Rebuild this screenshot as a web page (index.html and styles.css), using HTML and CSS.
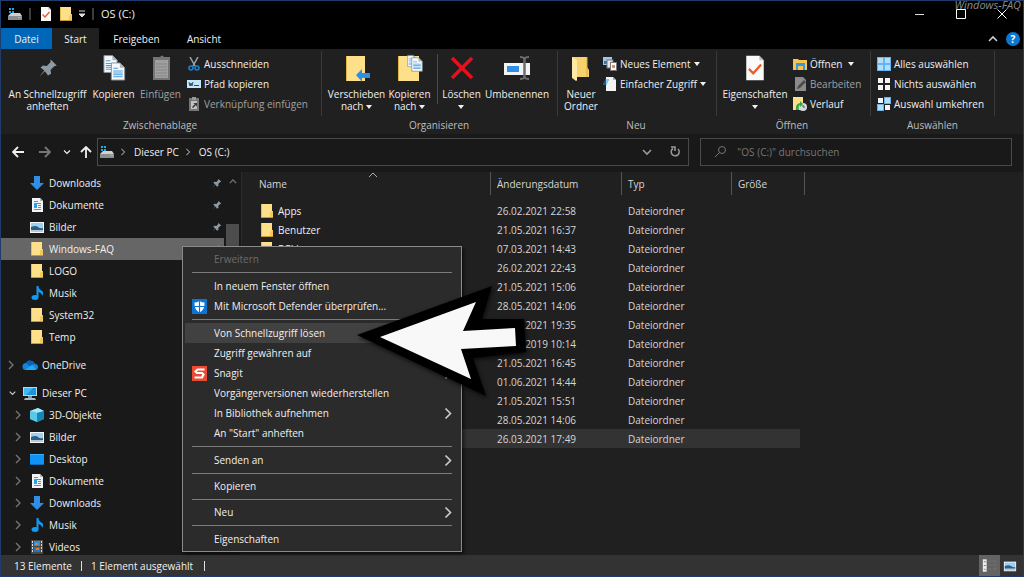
FILE: index.html
```html
<!DOCTYPE html>
<html lang="de">
<head>
<meta charset="utf-8">
<title>OS (C:)</title>
<link rel="stylesheet" href="styles.css">
</head>
<body>
<svg class="sprite" aria-hidden="true">
  <symbol id="folder" viewBox="0 0 14 16"><path d="M1 1h11v14H1z" fill="#ffe08a"/><path d="M1 1h1v14H1z" fill="#e9bd4c"/><path d="M10 10l2-2h1v7h-3z" fill="#f3c95c"/><path d="M1 14h12v1H1z" fill="#c9982e"/></symbol>
  <symbol id="drive" viewBox="0 0 16 16"><path d="M2 2h2v2H2zM5 2h2v2H5zM2 5h2v2H2zM5 5h2v2H5z" fill="#1fa8e8"/><path d="M4 7h9l2 3H1z" fill="#d0d0d0"/><rect x="1" y="10" width="14" height="4" fill="#8b8f90"/><rect x="11" y="11" width="3" height="1" fill="#4df05a"/></symbol>
  <symbol id="down" viewBox="0 0 16 16"><path d="M5 1h6v7h4l-7 7-7-7h4z" fill="#2f8fe4"/></symbol>
  <symbol id="doc" viewBox="0 0 16 16"><path d="M3 1h8l3 3v11H3z" fill="#f1f5f7"/><path d="M11 1v3h3" fill="#a9b7bf"/><path d="M5 4h4v1H5zM5 6h7v1H5zM9 8h3v1H9zM5 12h7v1H5zM9 10h3v1H9z" fill="#6a8ea8"/><path d="M5 7h3v4H5z" fill="#2c9fe6"/></symbol>
  <symbol id="image" viewBox="0 0 16 16"><rect x="1" y="3" width="14" height="11" fill="#f3f5f6"/><rect x="2" y="4" width="12" height="9" fill="#9ccff2"/><path d="M2 8q5-2 7 0t5 1v2H2z" fill="#315d80"/><path d="M2 11h12v2H2z" fill="#b7c9d4"/></symbol>
  <symbol id="music" viewBox="0 0 16 16"><ellipse cx="6" cy="12.500" rx="3.500" ry="2.500" fill="#129af0"/><path d="M7.500 12V1h2q0 3 3 4.500T13 11q0-3-3.500-4v5z" fill="#129af0"/></symbol>
  <symbol id="cloud" viewBox="0 0 16 16"><path d="M4 13a3.500 3.500 0 0 1 0-7 5 5 0 0 1 9 1 3 3 0 0 1 0 6z" fill="#1484dc"/><path d="M4 6a5 5 0 0 1 9 1q-3 0-5 2z" fill="#0a62b5"/><path d="M3 13l7-5 4 4-1 1z" fill="#2ba7f0"/></symbol>
  <symbol id="pc" viewBox="0 0 16 16"><rect x="1" y="2" width="14" height="9" fill="#b9d7e7"/><rect x="2" y="3" width="12" height="7" fill="#1b94dc"/><path d="M2 3h9L4 10H2z" fill="#45b8f2"/><path d="M6 11h4v2H6z" fill="#7a94a3"/><path d="M3 13h10l1 2H2z" fill="#a9bac4"/></symbol>
  <symbol id="cube" viewBox="0 0 16 16"><path d="M1 4l8-3 6 3v8l-7 3-7-3z" fill="#2fb3df"/><path d="M1 4l8-3 6 3-7 2z" fill="#a7e8f6"/><path d="M8 6l7-2v8l-7 3z" fill="#1a86b8"/><path d="M1 4l7 2v9l-7-3z" fill="#59c9ea"/></symbol>
  <symbol id="desktop" viewBox="0 0 16 16"><rect x="1" y="3" width="14" height="11" fill="#0f93f5"/><path d="M1 3h14v1H1z" fill="#39adff"/><path d="M1 13h14v1H1z" fill="#0a6ec0"/></symbol>
  <symbol id="film" viewBox="0 0 16 16"><rect x="2" y="1" width="12" height="14" fill="#4a4a4a"/><path d="M3 2h1v2H3zM3 5h1v2H3zM3 8h1v2H3zM3 11h1v2H3zM12 2h1v2h-1zM12 5h1v2h-1zM12 8h1v2h-1zM12 11h1v2h-1z" fill="#ddd"/><rect x="5" y="2" width="6" height="5" fill="#2b8fd8"/><rect x="5" y="8" width="6" height="5" fill="#2b72b8"/><path d="M6 4h3v2H6zM7 9h3v2H7z" fill="#e27a35"/></symbol>
  <symbol id="pin" viewBox="0 0 16 16"><path d="M10 1l5 5-2 .5-3 3 .5 3L8 14l-2.500-3.500L1 15l4-5L2 7.500 4 6l3 .3 3-3z" fill="#8d99a3"/></symbol>
  <symbol id="chev" viewBox="0 0 8 10"><path d="M2 1l4 4-4 4" fill="none" stroke="currentColor" stroke-width="1.300"/></symbol>
  <symbol id="chevdown" viewBox="0 0 10 8"><path d="M1 2l4 4 4-4" fill="none" stroke="currentColor" stroke-width="1.600"/></symbol>
  <symbol id="chevup" viewBox="0 0 10 8"><path d="M1 6l4-4 4 4" fill="none" stroke="currentColor" stroke-width="1.600"/></symbol>
  <symbol id="caret" viewBox="0 0 6 4"><path d="M0 0h6L3 4z" fill="currentColor"/></symbol>
  <symbol id="check" viewBox="0 0 24 32"><path d="M2 2h15l5 5v23H2z" fill="#fafafa"/><path d="M17 2v5h5z" fill="#b9b9b9"/><path d="M5 17l5 5 9-10" fill="none" stroke="#ee5a24" stroke-width="2.600"/></symbol>
  <symbol id="page" viewBox="0 0 16 20"><path d="M1 1h9l5 5v13H1z" fill="#f5f9fc" stroke="#8a8f94"/><path d="M10 1v5h5z" fill="#aab6c0"/><path d="M3 6h5v1H3zM3 9h10v1H3zM3 11h10v1H3zM3 13h10v1H3zM3 15h10v1H3z" fill="#4a9ee0"/></symbol>
  <symbol id="arrowleft" viewBox="0 0 12 12"><path d="M6 1L1 6l5 5M1 6h11" fill="none" stroke="currentColor" stroke-width="1.800"/></symbol>
</svg>

<div class="window">
  <header class="titlebar">
    <svg class="i16"><use href="#drive"/></svg>
    <span class="bar"></span>
    <button class="plain" aria-label="Eigenschaften"><svg class="i16"><use href="#check"/></svg></button>
    <button class="plain" aria-label="Neuer Ordner"><svg class="i16"><use href="#folder"/></svg></button>
    <button class="plain" aria-label="Symbolleiste anpassen"><svg class="quick" viewBox="0 0 8 8"><path d="M1 1h6M1 4h6L4 7z" stroke="#ddd" fill="#ddd"/></svg></button>
    <span class="bar"></span>
    <h1>OS (C:)</h1>
    <div class="controls">
      <button class="plain" aria-label="Minimieren"><svg viewBox="0 0 12 12"><path d="M1 6.500h9" stroke="#ddd"/></svg></button>
      <button class="plain" aria-label="Maximieren"><svg viewBox="0 0 12 12"><path d="M1.500 1.500h9v9h-9z" stroke="#fff" fill="none"/></svg></button>
      <button class="plain" aria-label="Schließen"><svg viewBox="0 0 12 12"><path d="M1.500 1.500l9 9M10.500 1.500l-9 9" stroke="#fff"/></svg></button>
    </div>
    <span class="watermark">Windows-FAQ</span>
  </header>

  <nav class="tabs">
    <button class="tab file">Datei</button>
    <button class="tab active">Start</button>
    <button class="tab">Freigeben</button>
    <button class="tab">Ansicht</button>
    <div class="tabtools">
      <button class="plain" aria-label="Menüband minimieren"><svg class="chevron"><use href="#chevup"/></svg></button>
      <button class="help" aria-label="Hilfe">?</button>
    </div>
  </nav>

  <section class="ribbon">
    <div class="group clipboard">
      <div class="tools">
        <button class="big"><svg class="i22"><use href="#pin"/></svg><span>An Schnellzugriff<br>anheften</span></button>
        <button class="big"><svg class="i26" viewBox="0 0 26 28"><use href="#page" x="2" y="0" width="15" height="20"/><use href="#page" x="9" y="8" width="16" height="19"/></svg><span>Kopieren</span></button>
        <button class="big dim"><svg class="i26" viewBox="0 0 26 28"><rect x="5" y="3" width="17" height="23" fill="#747474"/><path d="M7 6h13v18H7z" fill="#a0a0a0"/><path d="M8 10h11M8 13h11M8 16h11M8 19h11M8 22h11" stroke="#858585"/><path d="M9 6V3h3q2-3 4 0h2v3z" fill="#747474"/></svg><span>Einfügen</span></button>
        <div class="stack">
          <button class="small"><svg class="i14" viewBox="0 0 14 14"><path d="M3 0l5 9M11 0L6 9" stroke="#9aa7af" stroke-width="1.500"/><circle cx="4" cy="11" r="2" fill="none" stroke="#1781d2" stroke-width="1.600"/><circle cx="10" cy="11" r="2" fill="none" stroke="#1781d2" stroke-width="1.600"/></svg>Ausschneiden</button>
          <button class="small"><svg class="i14" viewBox="0 0 14 14"><rect y="3" width="14" height="8" fill="#c8e6fa"/><path d="M2 5l1 4 1-3 1 3 1-4M7 8.500h5" stroke="#23506e" fill="none"/></svg>Pfad kopieren</button>
          <button class="small dim"><svg class="i14" viewBox="0 0 14 14"><path d="M2 1h10v13H2z" fill="#777"/><path d="M4 4h6v8H4z" fill="#c2c2c2"/><path d="M5 0h4v3H5z" fill="#999"/><path d="M5 10l3-3-2-1h4v4L9 8l-3 3z" fill="#333"/></svg>Verknüpfung einfügen</button>
        </div>
      </div>
      <h2>Zwischenablage</h2>
    </div>
    <div class="group organize">
      <div class="tools">
        <button class="big move"><svg class="i26" viewBox="0 0 26 28"><path d="M2 2h19v25H2z" fill="#ffe08a"/><path d="M2 2h1v25H2z" fill="#e3b64a"/><path d="M12 21l6-6v4h8v5h-8v4z" fill="#2f8fe4"/></svg><span>Verschieben<br>nach <svg class="caret"><use href="#caret"/></svg></span></button>
        <button class="big"><svg class="i26" viewBox="0 0 26 28"><path d="M1 2h21v25H1z" fill="#ffe08a"/><path d="M1 2h1v25H1z" fill="#e3b64a"/><use href="#page" x="10" y="0" width="10" height="14"/><use href="#page" x="14" y="3" width="12" height="15"/></svg><span>Kopieren<br>nach <svg class="caret"><use href="#caret"/></svg></span></button>
        <span class="divider"></span>
        <button class="big delete"><svg class="i26" viewBox="0 0 26 28"><path d="M3 4l20 20M23 4L3 24" stroke="#e8101a" stroke-width="3.500"/></svg><span>Löschen<br><svg class="caret"><use href="#caret"/></svg></span></button>
        <button class="big rename"><svg class="i26" viewBox="0 0 26 28"><rect x="0" y="9" width="26" height="12" fill="#f4f4f4"/><rect x="3" y="12" width="12" height="6" fill="#2f8fe4"/><path d="M20.500 4v20" stroke="#6c6c6c" stroke-width="2.500"/><path d="M16 3q4 0 4.500 2 .5-2 4.500-2M16 25q4 0 4.500-2 .5 2 4.500 2" stroke="#6c6c6c" stroke-width="2" fill="none"/></svg><span>Umbenennen</span></button>
      </div>
      <h2>Organisieren</h2>
    </div>
    <div class="group new">
      <div class="tools">
        <button class="big"><svg class="i26" viewBox="0 0 26 28"><path d="M4 3h15v10l2 3v7H9l-1 4-4-3z" fill="#f7d16c"/><path d="M4 3l5 3v21l-5-4z" fill="#ffe9a6"/><path d="M19 3v20" stroke="#d9ab40"/></svg><span>Neuer<br>Ordner</span></button>
        <div class="stack">
          <button class="small"><svg class="i14" viewBox="0 0 14 14"><rect width="9" height="8" fill="#9cc9ea"/><path d="M1 4h7v3H1z" fill="#3b76a5"/><rect x="4" y="3" width="6" height="8" fill="#e8e8e8" stroke="#777"/><rect x="7.500" y="5.500" width="6" height="8" fill="#fff" stroke="#777"/><path d="M9 8h3v3H9z" fill="#dc8d68"/></svg>Neues Element <svg class="caret"><use href="#caret"/></svg></button>
          <button class="small"><svg class="i14" viewBox="0 0 14 14"><path d="M3 0h7l3 3v11H3z" fill="#f4f4f4"/><path d="M10 0v3h3z" fill="#aaa"/><path d="M2 3h4M1 5h4M0 7h4" stroke="#2f8fe4"/></svg>Einfacher Zugriff <svg class="caret"><use href="#caret"/></svg></button>
        </div>
      </div>
      <h2>Neu</h2>
    </div>
    <div class="group open">
      <div class="tools">
        <button class="big"><svg class="i26"><use href="#check"/></svg><span>Eigenschaften<br><svg class="caret"><use href="#caret"/></svg></span></button>
        <div class="stack">
          <button class="small"><svg class="i14" viewBox="0 0 14 14"><path d="M0 2h5l1 1h8v10H0z" fill="#f6c453"/><path d="M3 6h9v7h-2V9H5v4H3z" fill="#3a96dd"/></svg>Öffnen <svg class="caret wide"><use href="#caret"/></svg></button>
          <button class="small dim"><svg class="i14" viewBox="0 0 14 14"><path d="M2 0h8l3 3v11H2z" fill="#8b8b8b"/><path d="M4 12l1-3 6-6 2 2-6 6z" fill="#4c4c4c"/></svg>Bearbeiten</button>
          <button class="small"><svg class="i14" viewBox="0 0 14 14"><path d="M0 0h10v13H0z" fill="#ffe08a"/><circle cx="10" cy="10" r="4" fill="#d3d8da"/><path d="M10 8v2h2" stroke="#555" fill="none"/><path d="M3 13q-1-6 4-7V4l3 3-3 3V8q-2 1-1 5z" fill="#30a84c"/></svg>Verlauf</button>
        </div>
      </div>
      <h2>Öffnen</h2>
    </div>
    <div class="group select">
      <div class="tools">
        <div class="stack">
          <button class="small"><svg class="i14" viewBox="0 0 14 14"><path d="M0 0h14v14H0z" fill="#62b5f2"/><path d="M1 1h5v5H1zM8 1h5v5H8zM1 8h5v5H1zM8 8h5v5H8z" fill="#b5ddf8"/></svg>Alles auswählen</button>
          <button class="small"><svg class="i14" viewBox="0 0 14 14"><path d="M1 1h5v5H1zM8 1h5v5H8zM1 8h5v5H1zM8 8h5v5H8z" fill="#f4f4f4"/></svg>Nichts auswählen</button>
          <button class="small"><svg class="i14" viewBox="0 0 14 14"><path d="M7 0h7v7H7zM0 7h7v7H0z" fill="#62b5f2"/><path d="M8 1h5v5H8zM1 8h5v5H1z" fill="#b5ddf8"/><path d="M1 1h5v5H1zM8 8h5v5H8z" fill="#f4f4f4"/></svg>Auswahl umkehren</button>
        </div>
      </div>
      <h2>Auswählen</h2>
    </div>
  </section>

  <div class="navbar">
    <button class="plain nav" aria-label="Zurück"><svg class="i12"><use href="#arrowleft"/></svg></button>
    <button class="plain nav off" aria-label="Vorwärts"><svg class="i12" viewBox="0 0 12 12"><path d="M6 1l5 5-5 5M11 6H0" fill="none" stroke="currentColor" stroke-width="1.800"/></svg></button>
    <button class="plain recent" aria-label="Verlauf"><svg viewBox="0 0 10 8"><use href="#chevdown"/></svg></button>
    <button class="plain up" aria-label="Nach oben"><svg class="i12" viewBox="0 0 12 12"><path d="M1 6l5-5 5 5M6 1v11" fill="none" stroke="currentColor" stroke-width="1.800"/></svg></button>
    <div class="address">
      <svg class="i16"><use href="#drive"/></svg>
      <svg class="crumb"><use href="#chev"/></svg><span>Dieser PC</span>
      <svg class="crumb"><use href="#chev"/></svg><span>OS (C:)</span>
      <button class="plain drop" aria-label="Vorherige Orte"><svg class="chevron"><use href="#chevdown"/></svg></button>
      <button class="plain" aria-label="Aktualisieren"><svg class="i12" viewBox="0 0 12 12"><path d="M9 3a4 4 0 1 1-5-.5M2 1h4v4" fill="none" stroke="#999" stroke-width="1.500"/></svg></button>
    </div>
    <label class="search">
      <svg class="i14" viewBox="0 0 14 14"><circle cx="9" cy="5" r="3.500" fill="none" stroke="#777"/><path d="M6.500 7.500L2 12" stroke="#777"/></svg>
      <input type="search" placeholder="&quot;OS (C:)&quot; durchsuchen" aria-label="Suche">
    </label>
  </div>

  <main class="content">
    <aside class="sidebar">
      <ul>
        <li class="child"><svg class="i16"><use href="#down"/></svg>Downloads<svg class="pin"><use href="#pin"/></svg></li>
        <li class="child"><svg class="i16"><use href="#doc"/></svg>Dokumente<svg class="pin"><use href="#pin"/></svg></li>
        <li class="child"><svg class="i16"><use href="#image"/></svg>Bilder<svg class="pin"><use href="#pin"/></svg></li>
        <li class="child selected"><svg class="i16"><use href="#folder"/></svg>Windows-FAQ<svg class="pin"><use href="#pin"/></svg></li>
        <li class="child"><svg class="i16"><use href="#folder"/></svg>LOGO</li>
        <li class="child"><svg class="i16"><use href="#music"/></svg>Musik</li>
        <li class="child"><svg class="i16"><use href="#folder"/></svg>System32</li>
        <li class="child"><svg class="i16"><use href="#folder"/></svg>Temp</li>
        <li class="root"><svg class="exp"><use href="#chev"/></svg><svg class="i16"><use href="#cloud"/></svg>OneDrive</li>
        <li class="root"><svg class="exp open"><use href="#chevdown"/></svg><svg class="i16"><use href="#pc"/></svg>Dieser PC</li>
        <li class="sub"><svg class="exp"><use href="#chev"/></svg><svg class="i16"><use href="#cube"/></svg>3D-Objekte</li>
        <li class="sub"><svg class="exp"><use href="#chev"/></svg><svg class="i16"><use href="#image"/></svg>Bilder</li>
        <li class="sub"><svg class="exp"><use href="#chev"/></svg><svg class="i16"><use href="#desktop"/></svg>Desktop</li>
        <li class="sub"><svg class="exp"><use href="#chev"/></svg><svg class="i16"><use href="#doc"/></svg>Dokumente</li>
        <li class="sub"><svg class="exp"><use href="#chev"/></svg><svg class="i16"><use href="#down"/></svg>Downloads</li>
        <li class="sub"><svg class="exp"><use href="#chev"/></svg><svg class="i16"><use href="#music"/></svg>Musik</li>
        <li class="sub"><svg class="exp"><use href="#chev"/></svg><svg class="i16"><use href="#film"/></svg>Videos</li>
      </ul>
      <div class="scrollbar"><svg viewBox="0 0 10 8"><use href="#chevup"/></svg><span class="thumb"></span></div>
    </aside>
    <section class="files">
      <table>
        <colgroup><col class="c-name"><col class="c-date"><col class="c-type"><col class="c-size"></colgroup>
        <thead><tr><th>Name<svg class="sort" viewBox="0 0 10 8"><path d="M1 6l4-4 4 4" fill="none" stroke="currentColor"/></svg></th><th>Änderungsdatum</th><th>Typ</th><th>Größe</th></tr></thead>
        <tbody>
          <tr><td><svg class="i16"><use href="#folder"/></svg>Apps</td><td>26.02.2021 22:58</td><td>Dateiordner</td><td></td></tr>
          <tr><td><svg class="i16"><use href="#folder"/></svg>Benutzer</td><td>21.05.2021 16:37</td><td>Dateiordner</td><td></td></tr>
          <tr><td><svg class="i16"><use href="#folder"/></svg>DELL</td><td>07.03.2021 14:43</td><td>Dateiordner</td><td></td></tr>
          <tr><td></td><td>26.02.2021 22:43</td><td>Dateiordner</td><td></td></tr>
          <tr><td></td><td>21.05.2021 15:06</td><td>Dateiordner</td><td></td></tr>
          <tr><td></td><td>28.05.2021 14:06</td><td>Dateiordner</td><td></td></tr>
          <tr><td></td><td>21.05.2021 19:35</td><td>Dateiordner</td><td></td></tr>
          <tr><td></td><td>07.12.2019 10:14</td><td>Dateiordner</td><td></td></tr>
          <tr><td></td><td>21.05.2021 16:45</td><td>Dateiordner</td><td></td></tr>
          <tr><td></td><td>01.06.2021 14:44</td><td>Dateiordner</td><td></td></tr>
          <tr><td></td><td>21.05.2021 15:51</td><td>Dateiordner</td><td></td></tr>
          <tr><td></td><td>28.05.2021 14:06</td><td>Dateiordner</td><td></td></tr>
          <tr class="picked"><td></td><td>26.03.2021 17:49</td><td>Dateiordner</td><td></td></tr>
        </tbody>
      </table>
    </section>
  </main>

  <footer class="status">
    <span>13 Elemente</span><span class="tick"></span><span>1 Element ausgewählt</span><span class="tick"></span>
    <div class="views">
      <button class="plain on" aria-label="Details"><svg viewBox="0 0 22 21"><rect x="4" y="4" width="4" height="13" fill="#eee"/><path d="M5 6h2v1H5zM5 10h2v1H5z" fill="#678"/><path d="M5 14h2v1H5z" fill="#c74"/><path d="M10 6h3M15 6h3M10 10h3M15 10h3M10 14h3M15 14h3" stroke="#777"/></svg></button>
      <button class="plain" aria-label="Große Symbole"><svg class="i14"><use href="#image"/></svg></button>
    </div>
  </footer>

  <div class="menu" role="menu">
    <button role="menuitem" disabled>Erweitern</button>
    <hr>
    <button role="menuitem">In neuem Fenster öffnen</button>
    <button role="menuitem"><svg class="mi" viewBox="0 0 15 15"><rect width="15" height="15" fill="#0f74d1"/><path d="M7.500 2q2.500 1.500 5 1.500 .5 7-5 10-5.500-3-5-10 2.500 0 5-1.500z" fill="#fff"/><path d="M7.500 2v12M2 7.500h11" stroke="#0f74d1" stroke-width="1.200"/></svg>Mit Microsoft Defender überprüfen...</button>
    <hr>
    <button role="menuitem" class="hover">Von Schnellzugriff lösen</button>
    <button role="menuitem">Zugriff gewähren auf</button>
    <button role="menuitem"><svg class="mi" viewBox="0 0 15 15"><rect width="15" height="15" fill="#e94b35"/><path d="M12.500 3.500H5.500L3.500 5.500 5 7h5l1.500 1.500-1.500 3H2.500" fill="none" stroke="#fff" stroke-width="2.200"/></svg>Snagit<svg class="more"><use href="#chev"/></svg></button>
    <button role="menuitem">Vorgängerversionen wiederherstellen</button>
    <button role="menuitem">In Bibliothek aufnehmen<svg class="more"><use href="#chev"/></svg></button>
    <button role="menuitem">An "Start" anheften</button>
    <hr>
    <button role="menuitem">Senden an<svg class="more"><use href="#chev"/></svg></button>
    <hr class="tight">
    <button role="menuitem">Kopieren</button>
    <hr class="tight">
    <button role="menuitem">Neu<svg class="more"><use href="#chev"/></svg></button>
    <hr>
    <button role="menuitem">Eigenschaften</button>
  </div>

  <svg class="pointer" viewBox="0 0 170 112" aria-hidden="true"><path d="M0 50L135 1 125 34H167L169 67 116 73 129 111z"/><path d="M23 52L119 17 106 46 158 43 159 61 104 64 114 94z" fill="#f8f8f9"/></svg>
</div>
</body>
</html>
```
FILE: styles.css
```css
* { box-sizing: border-box; }

body {
  margin: 0;
  background: #000;
  color: #f0f0f0;
  font: 10px/12px "Open Sans", "Noto Sans", sans-serif;
}

button, input { font: inherit; color: inherit; }
button { border: 0; background: none; padding: 0; }
h1, h2, ul { margin: 0; padding: 0; font-weight: 400; font-size: inherit; }
ul { list-style: none; }
svg { flex: none; }
.sprite { position: absolute; width: 0; height: 0; }

.i12 { width: 12px; height: 12px; }
.i14 { width: 14px; height: 14px; }
.i16 { width: 16px; height: 16px; }
.i22 { width: 20px; height: 28px; }
.i26 { width: 26px; height: 28px; }
.caret { width: 6px; height: 4px; vertical-align: middle; }
.caret.wide { margin-left: 3px; }
.chevron { width: 10px; height: 8px; }
.plain { display: flex; align-items: center; justify-content: center; }

.window {
  position: relative;
  display: flex;
  flex-direction: column;
  height: 100vh;
  overflow: hidden;
  border: 1px solid #1f3d6c;
}

/* Title bar */
.titlebar { display: flex; align-items: center; height: 27px; padding: 0 0 2px 6px; }
.titlebar .bar { width: 2px; height: 12px; margin: 0 7px 0 6px; background: #3c3c3c; }
.titlebar .plain + .plain { margin-left: 4px; }
.titlebar h1 { font-size: 11px; }
.quick { width: 8px; height: 8px; }
.controls { display: flex; margin-left: auto; padding-right: 1px; }
.controls .plain, .titlebar .controls .plain + .plain { width: 41px; margin: 0; }
.controls svg { width: 12px; height: 12px; }
.watermark {
  position: absolute;
  top: 0;
  right: 2px;
  color: #8a8a8a;
  font-size: 11px;
  line-height: 8px;
  font-style: italic;
}

/* Tabs */
.tabs { display: flex; height: 21px; }
.tab { padding: 0; }
.tab.file { width: 51px; background: #0067b8; }
.tab.active { width: 47px; background: #202020; }
.tab:nth-child(3) { width: 75px; }
.tab:nth-child(4) { width: 60px; }
.tabtools { display: flex; align-items: center; gap: 8px; margin-left: auto; padding-right: 3px; color: #ccc; }
.help { width: 14px; height: 14px; border-radius: 50%; background: #0a78d0; font-weight: 700; color: #fff; line-height: 14px; }

/* Ribbon */
.ribbon { display: flex; height: 85px; padding-top: 2px; background: #202020; }
.group { display: flex; flex-direction: column; flex: none; border-right: 1px solid #3a3a3a; height: 65px; padding-top: 3px; }
.group h2 { margin: 5px 6px 0 0; text-align: center; color: #bdbdbd; }
.clipboard { width: 321px; padding-left: 4px; }
.organize { width: 236px; padding-left: 5px; }
.new { width: 159px; padding-left: 4px; }
.open { width: 154px; padding-left: 3px; }
.select { width: 124px; padding-left: 6px; }
.tools { display: flex; height: 60px; flex: none; }
.big { display: flex; flex-direction: column; align-items: center; justify-content: flex-start; gap: 6px; flex: none; width: 47px; white-space: nowrap; }
.clipboard .big:first-child { width: 85px; }
.big.move { width: 59px; }
.big.rename { width: 64px; }
.new .big { width: 38px; }
.open .big { width: 70px; }
.divider { width: 1px; height: 50px; margin: 0 0 0 4px; background: #4a4a4a; }
.stack { display: flex; flex-direction: column; margin-left: 3px; }
.select .stack { margin-left: 0; }
.small { display: flex; align-items: center; gap: 3px; height: 20px; white-space: nowrap; }
.dim { color: #a0a0a0; }

/* Navigation row */
.navbar { display: flex; align-items: center; height: 38px; padding: 0 11px 2px 10px; background: #191919; }
.nav { width: 14px; margin-right: 13px; }
.nav.off { color: #777; margin-right: 11px; }
.recent { width: 8px; margin-right: 9px; }
.recent svg { width: 8px; height: 6px; }
.up { width: 12px; margin-right: 5px; }
.address { display: flex; align-items: center; flex: 583 1 0; height: 28px; padding: 0 7px 0 1px; border: 1px solid #4a4a4a; }
.crumb { width: 8px; height: 8px; margin: 0 7px 0 5px; color: #999; }
.address .crumb:nth-of-type(2) { margin-left: 4px; }
.address .drop { margin: 0 17px 0 auto; color: #999; }
.search { display: flex; align-items: center; gap: 10px; flex: 298 1 0; height: 28px; margin-left: 11px; padding-left: 12px; border: 1px solid #4a4a4a; }
.search input { flex: 1; min-width: 0; padding: 0; border: 0; outline: 0; background: none; }
.search input::placeholder { color: #777; opacity: 1; }

/* Content */
.content { display: flex; flex: 1; min-height: 0; background: #202020; }
.sidebar { display: flex; flex: none; width: 241px; overflow: hidden; background: #191919; border-right: 1px solid #2b2b2b; }
.sidebar ul { flex: 1; }
.sidebar li { display: flex; align-items: center; gap: 4px; height: 22px; }
.child { padding-left: 28px; }
.root { margin-top: 6px; padding-left: 5px; }
.sub { padding-left: 12px; }
.exp { width: 10px; height: 10px; margin-right: 2px; color: #777; }
.exp.open { height: 8px; color: #ccc; }
.selected { background: #666; }
.pin { width: 10px; height: 10px; margin: 0 2px 0 auto; }
.scrollbar { display: flex; flex-direction: column; align-items: center; width: 17px; padding-top: 6px; color: #777; }
.scrollbar svg { width: 8px; height: 7px; }
.thumb { width: 13px; height: 190px; margin-top: 39px; background: #4d4d4d; }

.files { flex: 1; min-width: 0; }
.files table { width: 563px; table-layout: fixed; border-spacing: 0; color: #d6d6d6; }
.c-name { width: 249px; }
.c-date { width: 131px; }
.c-type { width: 110px; }
.c-size { width: 73px; }
.files th { position: relative; height: 23px; padding: 0 6px; border-right: 1px solid #555; text-align: left; font-weight: 400; }
.files th:first-child { padding-left: 17px; }
.sort { position: absolute; top: -1px; left: 126px; width: 10px; height: 8px; color: #aaa; }
.files tbody::before { content: ""; display: table-row; height: 6px; }
.files td { height: 19px; padding: 0 6px; }
.files td:first-child { display: flex; align-items: center; gap: 3px; padding-left: 17px; color: #f0f0f0; }
.picked td { background: #333; }
.picked td:last-child { border-right: 5px solid #202020; }

/* Status bar */
.status { display: flex; align-items: center; height: 21px; padding-left: 13px; background: #333; }
.tick { width: 1px; height: 10px; margin: 0 9px; background: #ddd; }
.status span:nth-child(4) { margin-left: 11px; }
.views { display: flex; margin-left: auto; height: 21px; padding-right: 3px; }
.views .plain { width: 20px; }
.views .on { width: 21px; background: #636363; }
.views .on svg { width: 21px; height: 21px; }

/* Context menu */
.menu {
  position: absolute;
  top: 245px;
  left: 181px;
  width: 280px;
  padding: 2px;
  border: 1px solid #8a8a8a;
  background: #2b2b2b;
  box-shadow: 2px 2px 3px #0008;
}
.menu button { position: relative; display: flex; align-items: center; width: 100%; height: 20px; padding: 0 6px 0 29px; text-align: left; }
.menu button:disabled { color: #6d6d6d; }
.menu .hover { background: #414141; }
.menu hr { height: 1px; margin: 3px 7px; border: 0; background: #7c7c7c; }
.menu hr.tight { margin-bottom: 2px; }
.mi { position: absolute; left: 7px; width: 15px; height: 15px; }
.more { width: 10px; height: 13px; margin-left: auto; color: #ccc; }

.pointer { position: absolute; top: 284px; left: 356px; width: 170px; height: 112px; filter: drop-shadow(1px 2px 2px #000a); }
```
